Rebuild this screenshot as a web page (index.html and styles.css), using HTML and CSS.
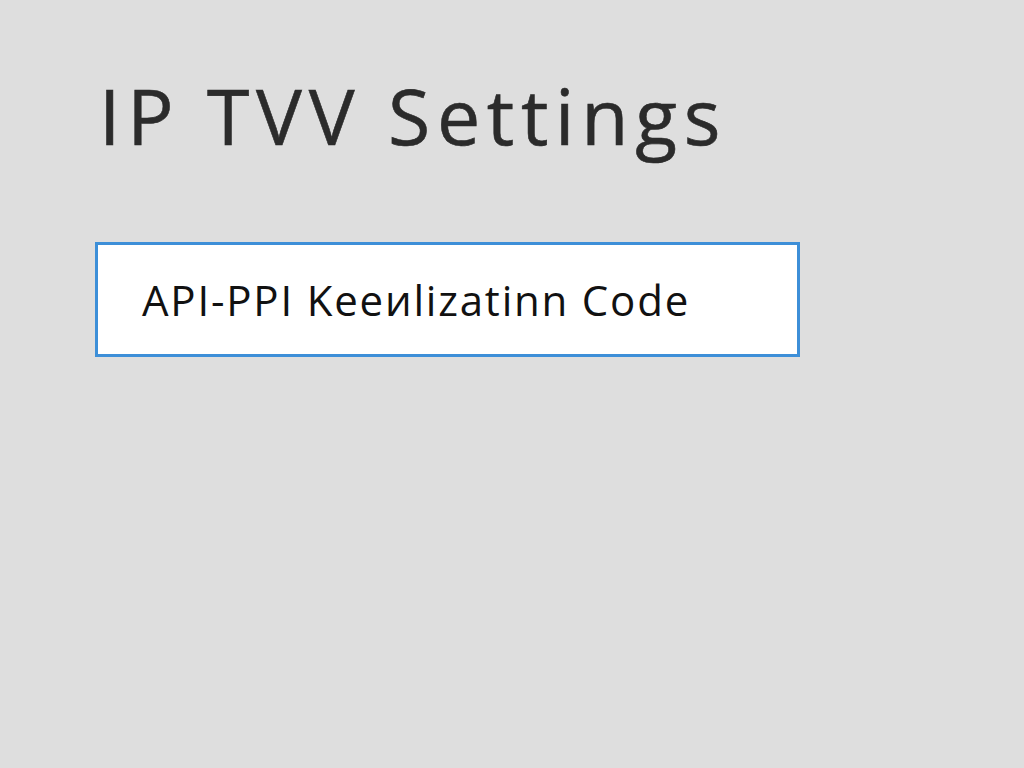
FILE: index.html
```html
<!DOCTYPE html>
<html>
<head>
<meta charset="utf-8">
<link rel="stylesheet" href="styles.css">
</head>
<body>
<main class="page">
  <h1 class="title">IP TVV Settings</h1>
  <div class="field">
    <span class="field-label">API-PPI Keeиlizatinn Code</span>
  </div>
</main>
</body>
</html>
```

FILE: styles.css
```css
html, body {
  margin: 0;
  padding: 0;
  background: #dedede;
  width: 1024px;
  height: 768px;
  overflow: hidden;
}
.page {
  display: flex;
  flex-direction: column;
  align-items: flex-start;
  padding: 71px 0 0 95px;
}
.title {
  margin: 0 0 0 4px;
  font-family: "Open Sans", sans-serif;
  font-weight: 500;
  font-size: 77px;
  line-height: 90px;
  letter-spacing: 6.7px;
  color: #2b2b2b;
  -webkit-text-stroke: 0.6px #2b2b2b;
}
.field {
  margin-top: 81px;
  width: 705px;
  height: 115px;
  box-sizing: border-box;
  border: 3px solid #3d8fd8;
  background: #ffffff;
  display: flex;
  align-items: center;
  padding: 0 0 0 44px;
}
.field-label {
  font-family: "Open Sans", sans-serif;
  font-size: 42px;
  color: #111;
  letter-spacing: 1.8px;
}
```
